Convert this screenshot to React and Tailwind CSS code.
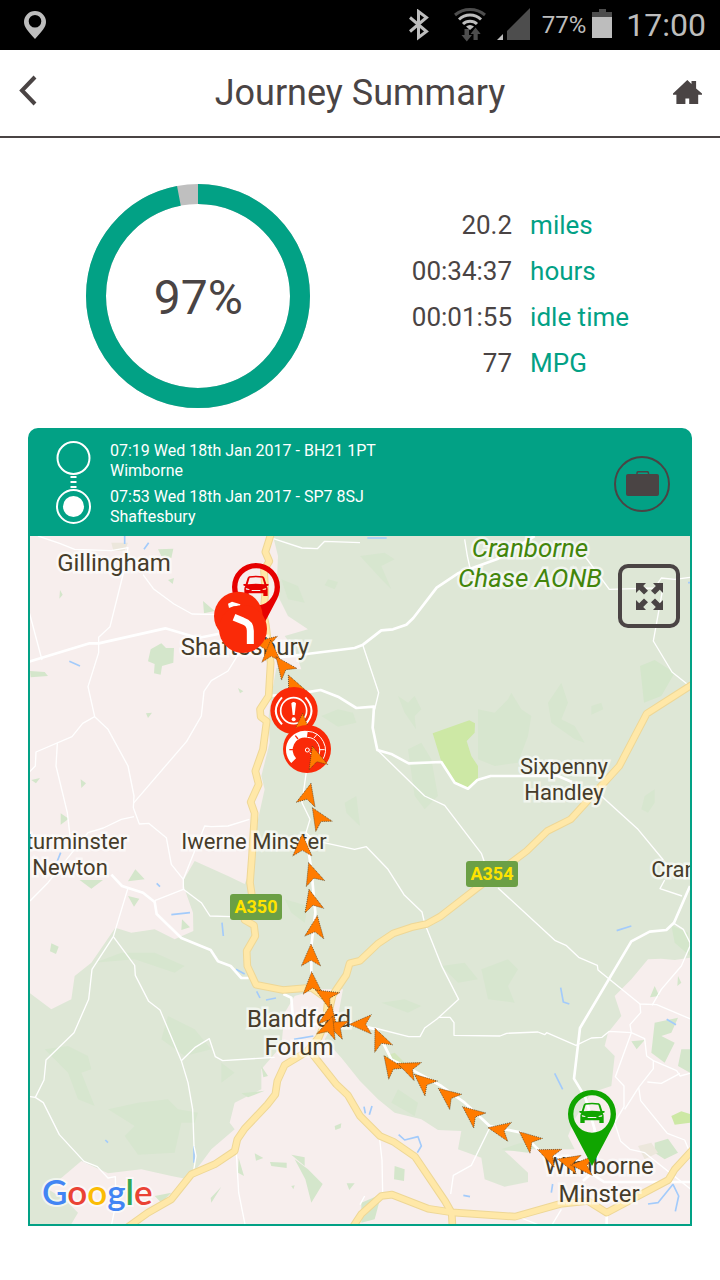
import clsx from "clsx";

const STATS = [
  { value: "20.2", label: "miles" },
  { value: "00:34:37", label: "hours" },
  { value: "00:01:55", label: "idle time" },
  { value: "77", label: "MPG" },
];

// Map canvas: 660 x 688, labels are placed by their centre
const MAP_W = 660;
const MAP_H = 688;

const PLACES = [
  { lines: ["Gillingham"], x: 84, y: 27, size: "text-2xl leading-7" },
  { lines: ["Cranborne", "Chase AONB"], x: 500, y: 27, size: "text-[26px] leading-[30px]", area: true },
  { lines: ["Shaftesbury"], x: 215, y: 111, size: "text-2xl leading-7" },
  { lines: ["Sixpenny", "Handley"], x: 534, y: 244, size: "text-[22px] leading-[26px]" },
  { lines: ["Iwerne Minster"], x: 224, y: 306, size: "text-[22px] leading-[26px]" },
  { lines: ["Sturminster", "Newton"], x: 40, y: 319, size: "text-[22px] leading-[26px]" },
  { lines: ["Cranborne"], x: 672, y: 334, size: "text-[22px] leading-[26px]" },
  { lines: ["Blandford", "Forum"], x: 269, y: 497, size: "text-2xl leading-7" },
  { lines: ["Wimborne", "Minster"], x: 569, y: 644, size: "text-2xl leading-7" },
];

const ROAD_SIGNS = [
  { name: "A354", x: 462, y: 338 },
  { name: "A350", x: 226, y: 371 },
];

const at = (x, y) => ({ left: `${(x / MAP_W) * 100}%`, top: `${(y / MAP_H) * 100}%` });

// Map drawing uses three units per pixel
const MAIN_ROADS = [
  "M730 -10L712 48L724 76L708 102L712 170L706 230L714 270L722 340L728 380L722 480L696 520L698 542L716 556L705 640L682 705L692 745L668 798L680 832L672 960L666 1040L672 1080L650 1152L678 1168L682 1200L656 1245L658 1290L684 1346L765 1362L850 1355L900 1390L890 1490",
  "M2010 434L1986 450L1856 533L1774 690L1628 850L1558 885L1496 945L1346 1057L1236 1142L1196 1164L1150 1174L1096 1192L1051 1222L996 1274L965 1282L955 1317L914 1377L900 1440L872 1505L835 1548L770 1587L748 1635L742 1675L718 1706L650 1778L628 1810L620 1845L560 1885L490 1915L430 1990L360 2030L290 2080",
  "M850 1550L925 1645L960 1678L996 1740L1056 1800L1096 1817L1161 1862L1251 1995L1271 2030L1274 2080",
  "M970 2080L1000 2034L1060 1980L1092 1976L1200 2018L1271 2029L1461 2042L1596 2004L1680 1995L1736 2030L1921 1932L1940 1900L2000 1835",
];

const B_ROADS = [
  "M0 378L185 322L212 322L412 277L510 306L600 288",
  "M740 366L980 336L1005 326L1060 283L1095 280L1135 266L1156 246L1226 155L1290 112L1410 68L1520 0",
  "M720 480L830 470L878 462L930 482L985 516L1038 512L1034 575L1048 642L1092 655L1142 682L1240 678L1280 740L1320 758L1348 732L1388 720L1590 720L1632 738",
  "M250 1016L282 1050L345 1070L380 1098L386 1134L460 1206L548 1242L570 1276L608 1290L640 1326L662 1326",
  "M1986 1050L1938 1160L1915 1182L1865 1187L1810 1216L1656 1476L1638 1628L1672 1684L1700 1780L1690 1880",
  "M766 1374L790 1385L794 1440L814 1470L880 1462",
  "M1665 1935L1690 1912L1728 1938L1990 1938",
  "M1736 2030V2080",
];

const LANES = [
  "M30 0L95 22L140 40L250 44L300 35L290 96L246 272L212 304L212 350L180 452L200 542L240 580L300 690L318 780L316 815L334 864L362 862L415 905L430 985L466 1030",
  "M0 215L42 372",
  "M345 116L376 158L438 204L492 234L580 236",
  "M640 340L600 405L550 434L528 466L520 540L476 616L316 802",
  "M200 542L164 562L132 602L24 648L22 690L0 712",
  "M88 622L84 690L118 830L126 900",
  "M6 1095L60 1040L180 890L226 876L280 850L318 842",
  "M736 8L822 36L868 38L890 16L996 20",
  "M300 1056L256 1202L192 1300L182 1390L138 1490L54 1572L48 1632L22 1684L6 1682",
  "M22 1684L46 1700L94 1796L168 1876L208 1892L240 1926L262 1922L264 2000L250 2070",
  "M256 1202L320 1288L322 1318L362 1396L396 1422L460 1574L480 1640L494 1720L498 1830L504 1860L496 1910",
  "M460 1574L500 1535L544 1508L562 1562L584 1574L740 1564",
  "M380 1094L466 1060L466 1030L530 870L550 872L600 870L664 850",
  "M466 1060L520 1100L546 1140L610 1142",
  "M625 1850L632 1970L652 2070",
  "M836 700L822 800L846 850L834 890L860 914L980 940L1015 932L1080 1000L1128 1076L1182 1128L1190 1162L1242 1292L1292 1390L1226 1450L1190 1476L1176 1502L1142 1502L1040 1476",
  "M1232 1444L1266 1444L1278 1460V1498L1416 1500L1436 1492L1530 1488L1550 1496L1556 1490L1644 1528L1690 1506L1722 1504L1744 1486L1810 1490",
  "M1004 326L1052 470L1040 520",
  "M1048 642L1190 780L1250 808L1360 952L1370 980",
  "M1410 1056L1582 1214L1614 1228L1652 1264L1708 1288L1710 1302L1836 1404L1886 1406L1990 1450",
  "M1836 1404L1838 1430L1806 1466L1810 1490L1762 1622L1788 1650V1712L1760 1760L1778 1816L1806 1840L1850 1850L1996 1966",
  "M1810 1490L1850 1508L1856 1560L1876 1574V1598L1832 1654L1790 1720",
  "M1876 1574L1946 1604L1956 1620L1986 1612M1956 1612L1900 1642L1858 1638",
  "M1832 1654L1838 1694L1918 1792L1970 1812L1986 1850",
  "M1872 1408L1900 1360L1960 1290L1986 1230V1220L1966 1180L1938 1162",
  "M1910 1032L1896 1058L1962 1080",
  "M1720 780L1830 880L1906 972",
  "M1670 60L1744 160L1880 156L1900 126L1940 130L1986 124",
  "M1904 160L1876 315L1932 408L1980 446",
  "M1310 10L1318 60L1326 96",
  "M1385 1776L1330 1888L1276 1918L1268 1974",
  "M1054 1800L1062 1872L1064 1970",
  "M1010 1980L996 2006M1600 2020L1570 2070M1480 2046L1540 2070",
];

const WOODS = [
  "M390 40L436 38L430 66L400 60ZM525 195L560 225L528 232ZM368 340L400 322L414 336L438 336L436 380L402 390L398 416L378 412L380 384L360 376ZM6 405L50 408L60 420L8 424ZM96 162L104 176L94 188ZM420 132L438 126L434 144ZM630 456L646 466L636 472ZM354 532L372 530L360 546ZM158 730L174 742L160 756ZM98 832L122 848L98 866ZM10 732L36 726L24 742ZM300 1080L334 1088L318 1112ZM322 1000L350 1030L300 1036ZM155 1032H225L190 1058ZM70 1222L92 1232L84 1254L66 1246ZM462 1150L486 1174L460 1182Z",
  "M790 1950L800 1948L796 1960Z",
  "M1836 390L1880 372L1940 410L1900 480L1848 500ZM1880 1460L1950 1445L1930 1490L1900 1500L1940 1520L1910 1580L1870 1550ZM1880 1350L1894 1380L1866 1384ZM1810 1516L1850 1512L1826 1540ZM1950 1320L1960 1340L1948 1350ZM1880 1820L1920 1808L1950 1850L1910 1870L1880 1850ZM1960 1540L1986 1540V1610L1950 1590ZM1930 1168L1980 1190L1986 1260L1940 1220ZM1100 1890L1130 1900L1128 1935L1098 1930ZM1000 2000L1060 1975L1040 2050L1000 2060Z",
  "M800 1870L840 1900L884 1944L850 2000L832 1930ZM726 1878L776 1880V1896L730 1890ZM680 1852L706 1866L684 1874ZM790 1856L830 1864L830 1890ZM580 1952L550 2000L548 1986ZM956 1942L980 1942L964 1962ZM632 1866L648 1920L630 1910ZM920 1770L940 1762L938 1776L922 1782ZM700 1590L720 1620L706 1624ZM640 1672L710 1664L660 1684ZM380 1980L430 1970L400 2000Z",
];

// woodland inside the green belt, barely darker than the ground
const FAINT_WOODS = [
  "M880 540L930 520L975 530L985 560L930 572ZM950 800L985 780L996 870L955 830ZM760 130L810 150L830 200L780 190ZM900 130L930 138L920 160L890 148ZM850 640L890 620L880 650Z",
  "M996 60L1070 50L1100 70L1060 90L1090 160L1060 130ZM1350 520L1400 530L1440 490L1450 470L1480 520L1510 540L1500 600L1470 680L1400 690L1350 670ZM1560 500L1600 440L1620 500L1600 550L1640 570L1670 620L1640 610L1570 560ZM1140 640L1180 620L1210 670L1230 780L1190 820L1160 780ZM1850 780L1880 760L1880 800L1860 830L1840 820ZM1110 480L1140 500L1160 480L1180 520L1160 540L1164 580L1130 530ZM1690 510L1720 500L1726 520L1690 536Z",
  "M50 1540L120 1530L180 1560L190 1600L160 1610L200 1710L150 1690L120 1610ZM240 1720L330 1700L420 1690L450 1720L510 1730L500 1760L460 1760L440 1850L330 1856L290 1800L320 1770ZM400 1510L420 1440L500 1480L550 1540L470 1560ZM200 1280L280 1250L380 1250L470 1290L440 1310L320 1270ZM580 1580L620 1610L580 1640ZM770 1090L840 1110L830 1160L790 1130Z",
  "M1360 1300L1440 1270L1470 1300L1440 1350L1460 1400L1380 1390ZM1240 1290L1310 1280L1350 1330L1290 1340ZM1060 1400L1130 1390L1180 1410L1140 1430ZM1110 1660L1170 1700L1160 1740L1090 1700ZM1420 1840L1480 1820L1520 1830L1500 1850Z",
];

const WATER =
  "M290 0V24M362 20L348 40M124 376L156 390M98 950L88 975M386 1042L396 1052M430 1136L486 1130M582 1160L586 1200M624 1300L650 1314M686 1366L696 1386M714 1392L744 1386M798 1510L856 1500M1766 1184L1810 1170M1598 1355L1606 1398L1624 1404M1580 1612L1604 1660M1916 1450L1944 1466M1112 1796L1130 1812L1170 1802L1180 1830L1168 1850M1570 1970L1574 1944M1306 1978L1326 1982M232 1812L240 1820M498 1830V1880M1860 2004L1890 2000L1935 1945L1952 1980L1942 2026M1018 6H1076M1980 140H1990M1008 1712L1012 1732M1032 1710L1024 1736";

// [x, y, heading] of every arrow tip along the journey
const TRACK = [
  [678, 318, -80],
  [728, 312, -2],
  [744, 362, -37],
  [781, 417, -25],
  [849, 742, 14],
  [853, 815, -32],
  [823, 894, 0],
  [842, 980, -18],
  [843, 1060, -14],
  [868, 1139, 8],
  [849, 1224, 0],
  [851, 1307, -3],
  [863, 1362, -60],
  [910, 1404, 10],
  [891, 1460, -70],
  [914, 1440, 18],
  [964, 1465, -90],
  [1041, 1477, -23],
  [1068, 1559, -35],
  [1108, 1582, -68],
  [1159, 1615, -50],
  [1231, 1657, -52],
  [1304, 1712, -51],
  [1380, 1775, -79],
  [1474, 1787, -50],
  [1529, 1841, -67],
  [1588, 1869, -75],
  [1628, 1887, -88],
];

function StatusBar() {
  return (
    <div className="flex h-[50px] items-center bg-black pl-6 pr-[14px] text-[#bdbdbd]">
      <svg className="mr-auto h-7 w-[22px]" viewBox="0 0 22 28" fill="currentColor" aria-hidden="true">
        <path
          fillRule="evenodd"
          d="M11 0a11 11 0 0 0-11 11c0 5 4 9 11 17 7-8 11-12 11-17a11 11 0 0 0-11-11zm0 4a6.300 6.300 0 1 1 0 12.600a6.300 6.300 0 1 1 0-12.600z"
        />
      </svg>
      <svg className="mr-6 h-8 w-5" viewBox="0 0 20 32" fill="none" stroke="currentColor" strokeWidth="3" aria-hidden="true">
        <path d="M1 8.500L17.500 22.500L9.500 28.500V2.500L17.500 8.500L1 22.500" />
      </svg>
      <svg className="mr-[10px] h-9 w-[34px]" viewBox="0 0 34 36" fill="none" strokeWidth="3" aria-hidden="true">
        <path d="M2 8A23 23 0 0 1 32 8" stroke="#4d4d4d" />
        <path d="M6 12.500A16 16 0 0 1 28 12.500M10 17A10 10 0 0 1 24 17" stroke="currentColor" />
        <path d="M13 19.500Q17 16.500 21 19.500L17 23z" fill="currentColor" />
        <path d="M11.500 22h4.500v6h3l-5.200 6.500L8.500 28h3zM20.500 33v-6h-3l5-6.500 5.200 6.500h-3v6z" fill="#4d4d4d" />
      </svg>
      <svg className="mr-3 h-9 w-[33px]" viewBox="0 0 33 36" aria-hidden="true">
        <path d="M6 27v6H0z" fill="currentColor" />
        <path d="M10 24L33 1v32H10z" fill="#4d4d4d" />
      </svg>
      <span className="text-2xl">77%</span>
      <svg className="ml-1.5 mr-[14px] h-[34px] w-5" viewBox="0 0 20 34" aria-hidden="true">
        <path d="M0 4h7V1h7v3h6v5H0z" fill="#4d4d4d" />
        <path d="M0 9h20v21H0z" fill="currentColor" />
      </svg>
      <span className="text-[32px]">17:00</span>
    </div>
  );
}

function Header() {
  return (
    <header className="flex h-[88px] items-center justify-between border-b-2 border-[#4a4444] px-[18px]">
      <button type="button" aria-label="Back" className="pb-1">
        <svg className="h-8 w-[29px]" viewBox="0 0 29 32" fill="none" stroke="currentColor" strokeWidth="4" aria-hidden="true">
          <path d="M17 2L4 15.500L17 29" />
        </svg>
      </button>
      <h1 className="text-4xl">Journey Summary</h1>
      <a href="#home" aria-label="Home" className="pb-0.5">
        <svg className="h-6 w-[29px]" viewBox="0 0 29 24" fill="currentColor" aria-hidden="true">
          <path d="M14.300 0l4.200 4V1h4.600v7.500L29 13.500v1.200h-3.800V24h-9v-5.500h-3.800V24H3.400v-9.300H0v-1.200z" />
        </svg>
      </a>
    </header>
  );
}

function ScoreRing({ score }) {
  return (
    <div className="relative h-56 w-56 justify-self-center">
      <svg className="h-full w-full -rotate-90" viewBox="0 0 224 224" fill="none" strokeWidth="20" aria-hidden="true">
        <circle cx="112" cy="112" r="102" stroke="#bfbfbf" />
        <circle cx="112" cy="112" r="102" stroke="#02a185" pathLength="100" strokeDasharray={`${score} 100`} />
      </svg>
      <p className="absolute inset-0 flex items-center justify-center pt-1 text-5xl">{score}%</p>
    </div>
  );
}

function Summary() {
  return (
    <section className="grid grid-cols-[51fr_49fr] pr-[27px] pl-[29px] pt-[46px] pb-5">
      <ScoreRing score={97} />
      <ul className="pt-[18px] text-[26px] leading-[46px]">
        {STATS.map(({ value, label }) => (
          <li key={label} className="grid grid-cols-[47fr_53fr] gap-[18px]">
            <span className="text-right">{value}</span>
            <span className="text-[#02a185]">{label}</span>
          </li>
        ))}
      </ul>
    </section>
  );
}

function JourneyHeader() {
  return (
    <div className="flex items-center pt-[11px] pr-5 pb-[9px] pl-[26px] text-white">
      <svg className="mr-[18px] h-[86px] w-9" viewBox="0 0 36 86" fill="none" stroke="currentColor" strokeWidth="2" aria-hidden="true">
        <circle cx="17.500" cy="17" r="16" />
        <path d="M17.500 35v14" strokeWidth="6" strokeDasharray="2 3" />
        <circle cx="17.500" cy="65.500" r="16.500" />
        <circle cx="17.500" cy="65.500" r="10.500" fill="currentColor" stroke="none" />
      </svg>
      <div className="flex flex-col gap-1.5 text-base leading-5">
        <p>
          07:19 Wed 18th Jan 2017 - BH21 1PT
          <br />
          Wimborne
        </p>
        <p>
          07:53 Wed 18th Jan 2017 - SP7 8SJ
          <br />
          Shaftesbury
        </p>
      </div>
      <button
        type="button"
        aria-label="Business journey"
        className="ml-auto flex h-14 w-14 items-center justify-center rounded-full border-2 border-[#4a4444] text-[#4a4444]"
      >
        <svg className="h-[27px] w-[33px]" viewBox="0 0 33 27" aria-hidden="true">
          <path d="M11 4V2a1.500 1.500 0 0 1 1.500-1.300h8.500a1.500 1.500 0 0 1 1.500 1.300v2" fill="none" stroke="currentColor" strokeWidth="1.500" />
          <rect y="3" width="33" height="22" rx="2" fill="currentColor" />
        </svg>
      </button>
    </div>
  );
}

function Terrain() {
  return (
    <svg className="absolute inset-0 h-full w-full" viewBox="6 0 1980 2064" preserveAspectRatio="none" fill="none" strokeLinejoin="round" aria-hidden="true">
      <path
        fill="#dee7d6"
        d="M735 0H1986V1265L1940 1272L1900 1268L1860 1270L1810 1330L1760 1380L1780 1440L1740 1490L1730 1530L1760 1560L1750 1650L1690 1670L1640 1750L1620 1800L1640 1840L1500 1840L1430 1845L1500 1910L1500 1938L1430 1952L1370 1930L1360 1865L1290 1840L1300 1785L1230 1782L1180 1750L1100 1730L1050 1690L996 1635L940 1565L890 1510L930 1440L945 1360L870 1360L800 1380L770 1430L760 1530L700 1600L700 1660L620 1700L605 1760L620 1780L550 1840L520 1880L480 1930L430 1920L340 1900L240 1912L160 1875L60 1960L110 1990L150 2030L130 2064H6V1372L70 1420L130 1390L140 1320L190 1280L262 1175L310 1190L380 1180L440 1210L496 1185L495 1130L470 1060L465 1035L500 975L600 1020L650 1044L672 990L690 850L710 760L700 720L725 620L722 540L730 480L745 395L820 400L800 340L770 300L840 280L780 240L745 170L750 60Z"
      />
      <g fill="#d4e6cb">
        {WOODS.map((d) => (
          <path key={d} d={d} />
        ))}
      </g>
      <g fill="#d7e6cf">
        {FAINT_WOODS.map((d) => (
          <path key={d} d={d} />
        ))}
      </g>
      <path fill="#cde8a5" d="M1214 592L1324 553L1341 562L1340 590L1316 615L1330 660L1350 690V728L1318 755L1278 740L1241 680Z" />
      <path fill="#cde8a5" d="M1930 1740L1960 1726L1986 1734V1760L1940 1766Z" />
      <path fill="#d3e6bd" d="M1070 1560L1100 1550L1130 1580L1100 1595Z" />
      <path fill="#ece7dc" d="M1830 1830L1870 1820L1890 1850L1850 1870ZM250 20H300L290 44H256Z" />
      <path d={WATER} stroke="#a3cbfb" strokeWidth="5" />
      <g stroke="#fff" strokeWidth="4">
        {LANES.map((d) => (
          <path key={d} d={d} />
        ))}
      </g>
      <g stroke="#fff" strokeWidth="8">
        {B_ROADS.map((d) => (
          <path key={d} d={d} />
        ))}
      </g>
      <g stroke="#eed796" strokeWidth="23">
        {MAIN_ROADS.map((d) => (
          <path key={d} d={d} />
        ))}
      </g>
      <g stroke="#ffe8a8" strokeWidth="17">
        {MAIN_ROADS.map((d) => (
          <path key={d} d={d} />
        ))}
      </g>
      {/* journey line */}
      <path
        stroke="#fff"
        strokeWidth="8"
        d="M834 900L850 1000L862 1130L850 1230V1340M960 1460L1045 1480L1090 1570L1150 1600L1240 1650L1310 1700L1385 1770L1480 1790L1540 1850L1690 1890"
      />
    </svg>
  );
}

function Arrow({ x, y, heading }) {
  return (
    <path
      transform={`translate(${x} ${y}) rotate(${heading})`}
      d="M0 0L-29 66L0 49L29 66Z"
      fill="#ff7b00"
      stroke="#4a3a20"
      strokeWidth="2"
      strokeDasharray="3 3"
    />
  );
}

function CarPin({ x, y, color }) {
  return (
    <g transform={`translate(${x} ${y})`} fill={color}>
      <path
        fillRule="evenodd"
        d="M0-72A72 72 0 0 0-72 0C-72 18-66 32-58 46L0 156L58 46C66 32 72 18 72 0A72 72 0 0 0 0-72ZM0-56A56 56 0 1 1 0 56A56 56 0 1 1 0-56Z"
      />
      <path
        fillRule="evenodd"
        d="M-21-32Q0-36 21-32L25-28L31-9L38-9L37-4L32-3Q36 2 35 10V27H22V19H-22V27H-35V10Q-36 2-32-3L-37-4L-38-9L-31-9L-25-28ZM-19-28L-25-8Q0-11 25-8L19-28Q0-30-19-28ZM-31 3L-29 8L-19 9L-21 6ZM31 3L29 8L19 9L21 6ZM-13 9V12H13V9Z"
      />
    </g>
  );
}

function Markers() {
  return (
    <svg className="absolute inset-0 h-full w-full" viewBox="6 0 1980 2064" preserveAspectRatio="none" fill="none" aria-hidden="true">
      {TRACK.map(([x, y, heading]) => (
        <Arrow key={`${x}-${y}`} x={x} y={y} heading={heading} />
      ))}
      <CarPin x={684} y={153} color="#e60000" />
      <CarPin x={1692} y={1734} color="#10a500" />

      {/* cornering */}
      <circle cx="631" cy="240" r="73" fill="#fa2a08" />
      <path d="M600 203L612 197L637 205L636 210L617 211L603 216Z" fill="#fff" />
      <circle cx="645" cy="279" r="72" fill="#fa2a08" />
      <path d="M618 244L645 255Q667 262 667 284V324" stroke="#fff" strokeWidth="21" />

      {/* harsh braking */}
      <circle cx="798" cy="524" r="71" fill="#fa2a08" />
      <g stroke="#fff" strokeWidth="5">
        <circle cx="797" cy="524" r="39" />
        <path d="M762 484Q725 524 762 565M832 484Q869 524 832 565" strokeWidth="6" />
      </g>
      <path d="M790 502Q797 494 804 502L800 537H794Z" fill="#fff" />
      <circle cx="797" cy="550" r="6" fill="#fff" />
      <Arrow x={824} y={532} heading={2} />

      {/* speeding */}
      <circle cx="837" cy="639" r="72" fill="#fa2a08" />
      <path d="M797 674A47 47 0 0 1 838 595" stroke="#fff" strokeWidth="20" />
      <path d="M784 641H796M802 599L810 609" stroke="#fa2a08" strokeWidth="4" />
      <path d="M838 586A56 56 0 0 1 882 674L868 664A38 38 0 0 0 838 604M868 594L858 606M890 641H874" stroke="#fff" strokeWidth="3" />
      <circle cx="838" cy="642" r="6" stroke="#fff" strokeWidth="3" />
      <path d="M845 650L866 667" stroke="#fff" strokeWidth="3" />
      <Arrow x={853} y={630} heading={-16} />
    </svg>
  );
}

function JourneyMap() {
  return (
    <div className="relative aspect-[660/688] overflow-hidden bg-[#f7eeed]">
      <Terrain />
      {ROAD_SIGNS.map(({ name, x, y }) => (
        <span
          key={name}
          style={at(x, y)}
          className="absolute flex h-[26px] w-[52px] -translate-x-1/2 -translate-y-1/2 items-center justify-center rounded-[3px] bg-[#6b9f45] text-lg font-bold text-[#ffe300]"
        >
          {name}
        </span>
      ))}
      {PLACES.map(({ lines, x, y, size, area }) => (
        <p
          key={`${x}-${y}`}
          style={at(x, y)}
          className={clsx(
            "absolute -translate-x-1/2 -translate-y-1/2 whitespace-nowrap text-center [-webkit-text-stroke:5px_#ffffff99] [paint-order:stroke_fill]",
            size,
            area ? "italic text-[#42850b]" : "text-[#463c2a]"
          )}
        >
          {lines.map((line) => (
            <span key={line} className="block">
              {line}
            </span>
          ))}
        </p>
      ))}
      <Markers />
      <button
        type="button"
        aria-label="Full screen"
        className="absolute top-7 right-[10px] flex h-16 w-[62px] items-center justify-center rounded-[10px] border-4 border-[#4a4444]"
      >
        <svg className="h-[27px] w-[27px]" viewBox="0 0 27 27" fill="currentColor" aria-hidden="true">
          <path d="M0 0h10L7.200 3L12 7.800L8 11.500L3.200 6.800L0 10zM27 0v10l-3.200-3.200L19 11.500L15 7.800L19.800 3L17 0zM0 27V17l3.200 3.200L8 15.500L12 19.200L7.200 24L10 27zM27 27H17l2.800-3L15 19.200L19 15.500l4.800 4.700L27 17z" />
        </svg>
      </button>
      <a
        href="#google-maps"
        className="absolute bottom-3 left-3 font-['Lato',sans-serif] text-[35px] leading-[42px] font-semibold [-webkit-text-stroke:4px_#ffffff99] [paint-order:stroke_fill]"
      >
        <span className="text-[#4285f4]">G</span>
        <span className="text-[#ea4335]">o</span>
        <span className="text-[#fbbc05]">o</span>
        <span className="text-[#4285f4]">g</span>
        <span className="text-[#34a853]">l</span>
        <span className="text-[#ea4335]">e</span>
      </a>
    </div>
  );
}

export default function App() {
  return (
    <div className="min-h-screen bg-white font-['Roboto',sans-serif] text-[#4a4444]">
      <StatusBar />
      <Header />
      <main>
        <Summary />
        <section className="mx-7 overflow-hidden rounded-t-[10px] border-2 border-[#02a185] bg-[#02a185]">
          <JourneyHeader />
          <JourneyMap />
        </section>
      </main>
    </div>
  );
}
